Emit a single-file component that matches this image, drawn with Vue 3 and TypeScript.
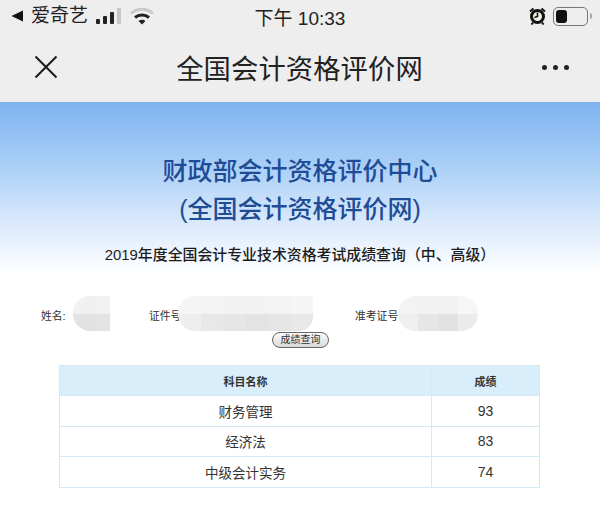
<script setup lang="ts">
const rows = [
  { name: '财务管理', score: 93 },
  { name: '经济法', score: 83 },
  { name: '中级会计实务', score: 74 },
]

// 打码区域的马赛克色块
const blobs = {
  name: ['#f1f1f1', '#f0f0f0', '#f1f1f1', '#e3e3e3', '#e2e2e2', '#e3e3e3'],
  id: ['#f5f5f5', '#f3f3f3', '#f1f1f1', '#f2f2f2', '#f3f3f3', '#f5f5f5', '#eeeeee', '#e8e8e8', '#e6e6e6', '#e3e3e3', '#e5e5e5', '#e8e8e8'],
  ticket: ['#f3f3f3', '#f2f2f2', '#f1f1f1', '#f6f6f6', '#efefef', '#e6e6e6', '#e2e2e2', '#ebebeb'],
}
</script>

<template>
  <div class="page">
    <header class="top">
      <div class="status">
        <div class="status-left">
          <svg class="back" width="13" height="12" viewBox="0 0 13 12"><path d="M0.5 6 12 0.5V11.5Z" fill="#111" /></svg>
          <span class="carrier">爱奇艺</span>
          <svg class="signal" width="27" height="17" viewBox="0 0 27 17">
            <rect x="0" y="11" width="4" height="5" rx="1" fill="#222" />
            <rect x="7" y="8" width="4" height="8" rx="1" fill="#222" />
            <rect x="14" y="4" width="4" height="12" rx="1" fill="#222" />
            <rect x="21" y="0" width="4" height="16" rx="1" fill="#c6c6c6" />
          </svg>
          <svg class="wifi" width="24" height="18" viewBox="0 0 24 18">
            <path d="M1 6.5C7 .8 17 .8 23 6.5" fill="none" stroke="#c9c9c9" stroke-width="3" />
            <path d="M5 10.5C9 7 15 7 19 10.5" fill="none" stroke="#222" stroke-width="3" />
            <path d="M8.5 14C10.5 12.3 13.5 12.3 15.5 14L12 17.5Z" fill="#222" />
          </svg>
        </div>
        <span class="time">下午 10:33</span>
        <div class="status-right">
          <svg width="17" height="18" viewBox="0 0 17 18">
            <circle cx="8.5" cy="9.5" r="6" fill="#f4f0e4" stroke="#111" stroke-width="3" />
            <path d="M8.5 5.5V9.5L5.5 10.5" fill="none" stroke="#111" stroke-width="1.6" />
            <path d="M1 4.5 4.5 1.5M16 4.5 12.5 1.5M4 15.5 2.5 17.5M13 15.5 14.5 17.5" stroke="#111" stroke-width="2" />
          </svg>
          <div class="battery"><i class="battery-level"></i></div>
          <i class="battery-cap"></i>
        </div>
      </div>
      <nav class="nav">
        <svg class="close" width="24" height="24" viewBox="0 0 24 24">
          <path d="M1.5 1.5 22.5 22.5M22.5 1.5 1.5 22.5" stroke="#1a1a1a" stroke-width="2" fill="none" />
        </svg>
        <span class="nav-title">全国会计资格评价网</span>
        <div class="dots"><i></i><i></i><i></i></div>
      </nav>
    </header>

    <main class="content">
      <section class="hero">
        <h1>财政部会计资格评价中心<br />(全国会计资格评价网)</h1>
        <h2>2019年度全国会计专业技术资格考试成绩查询&#xFF08;中、高级&#xFF09;</h2>
      </section>

      <section class="form">
        <div class="fields">
          <label class="field-name">姓名:</label>
          <div class="blob blob-name">
            <i v-for="(c, i) in blobs.name" :key="i" :style="{ background: c }"></i>
          </div>
          <label class="field-id">证件号</label>
          <div class="blob blob-id">
            <i v-for="(c, i) in blobs.id" :key="i" :style="{ background: c }"></i>
          </div>
          <label class="field-ticket">准考证号</label>
          <div class="blob blob-ticket">
            <i v-for="(c, i) in blobs.ticket" :key="i" :style="{ background: c }"></i>
          </div>
        </div>
        <button class="query">成绩查询</button>
      </section>

      <table class="scores">
        <thead>
          <tr>
            <th>科目名称</th>
            <th class="col-score">成绩</th>
          </tr>
        </thead>
        <tbody>
          <tr v-for="row in rows" :key="row.name">
            <td>{{ row.name }}</td>
            <td class="col-score">{{ row.score }}</td>
          </tr>
        </tbody>
      </table>
    </main>
  </div>
</template>

<style>
html, body { margin: 0; background: #fff; }
</style>

<style scoped>
.page { width: 600px; height: 525px; overflow: hidden; font-family: "Liberation Sans", "Noto Sans CJK SC", sans-serif; color: #222; background: #fff; }

.top { height: 102px; background: #eeeeee; }
.status { height: 32px; padding: 0 8px 0 11px; display: grid; grid-template-columns: 1fr auto 1fr; align-items: center; }
.status-left { display: flex; align-items: center; }
.back { margin-right: 7px; }
.carrier { font-size: 19px; line-height: 30px; color: #222; margin-right: 8px; }
.wifi { margin-left: 7px; }
.time { font-size: 19px; color: #222; margin-left: -3px; }
.status-right { display: flex; align-items: center; justify-content: flex-end; }
.battery { width: 29px; height: 13px; border: 1px solid #777; border-radius: 5px; margin-left: 7px; padding: 2px; }
.battery-level { display: block; width: 11px; height: 13px; background: #111; border-radius: 3px; }
.battery-cap { display: block; width: 2px; height: 6px; margin-left: 2px; background: #aaa; border-radius: 0 2px 2px 0; }

.nav { height: 70px; padding: 0 31px 0 34px; display: flex; align-items: center; justify-content: space-between; }
.close { display: block; }
.nav-title { font-size: 27.3px; letter-spacing: 0.1px; color: #222; margin-left: -1px; }
.dots { display: flex; gap: 6px; }
.dots i { display: block; width: 5px; height: 5px; border-radius: 50%; background: #222; }

.content { background: #fff; }
.hero { height: 170px; padding-top: 50px; box-sizing: border-box; background: linear-gradient(#7eb3f0 0%, #a6cdf6 35%, #d6e7fb 68%, #fdfeff 100%); text-align: center; }
.hero h1 { margin: 0; font-size: 25px; line-height: 38px; font-weight: 500; color: #1f4c96; }
.hero h2 { margin: 16px 0 0; font-size: 14.9px; line-height: 22px; font-weight: 500; color: #1c1c1c; white-space: nowrap; }

.form { margin-top: 24px; }
.fields { display: flex; align-items: center; height: 35px; font-size: 10.8px; color: #333; }
.fields label { white-space: nowrap; padding-top: 2px; }
.field-name { margin-left: 41px; width: 32px; }
.field-id { margin-left: 39px; width: 29px; }
.field-ticket { margin-left: 42px; width: 43px; }
.blob { display: grid; grid-template-rows: 1fr 1fr; height: 35px; overflow: hidden; }
.blob i { display: block; }
.blob-name { width: 37px; border-radius: 17px 0 0 17px; grid-template-columns: repeat(3, 1fr); }
.blob-id { width: 135px; border-radius: 17px 4px 14px 17px; grid-template-columns: repeat(6, 1fr); }
.blob-ticket { width: 80px; border-radius: 17px; grid-template-columns: repeat(4, 1fr); }
.query { display: block; width: 57px; height: 16px; margin: 1px 0 0 272px; padding: 0; border: 1px solid #666; border-radius: 8px; background: linear-gradient(#fbfbfb, #d9d9d9); font-family: inherit; font-size: 10px; line-height: 14px; color: #333; }

.scores { width: 481px; margin: 17px 0 0 59px; border-collapse: collapse; table-layout: fixed; font-size: 14px; color: #333; }
.scores th, .scores td { border: 1px solid #d4e9f2; text-align: center; padding: 0; box-sizing: border-box; }
.scores th { height: 30px; background: #d9eefb; font-size: 11px; font-weight: 700; color: #333; }
.scores td { height: 30.6px; font-size: 13.5px; }
.scores td.col-score { font-size: 14px; }
.col-score { width: 108px; }
</style>
